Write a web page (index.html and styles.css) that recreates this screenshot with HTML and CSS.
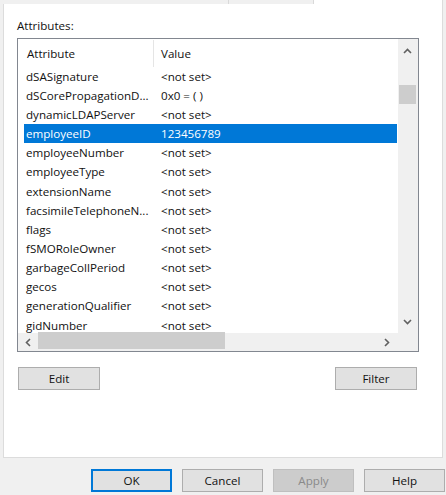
FILE: index.html
```html
<!DOCTYPE html>
<html>
<head>
<meta charset="utf-8">
<link rel="stylesheet" href="styles.css">
</head>
<body>
<div class="tabstrip">
  <div class="tab tab-a"></div>
  <div class="tab tab-b"></div>
  <div class="tab-rest"></div>
</div>
<div class="panel">
  <div class="label">Attributes:</div>
  <div class="listbox">
    <div class="listview">
      <div class="lv-header">
        <div class="hcell c1">Attribute</div>
        <div class="hcell c2">Value</div>
      </div>
      <div class="lv-body">
        <div class="row"><span class="cell">dSASignature</span><span class="cell">&lt;not set&gt;</span></div>
        <div class="row"><span class="cell">dSCorePropagationD...</span><span class="cell">0x0 = ( )</span></div>
        <div class="row"><span class="cell">dynamicLDAPServer</span><span class="cell">&lt;not set&gt;</span></div>
        <div class="row selected"><span class="cell">employeeID</span><span class="cell">123456789</span></div>
        <div class="row"><span class="cell">employeeNumber</span><span class="cell">&lt;not set&gt;</span></div>
        <div class="row"><span class="cell">employeeType</span><span class="cell">&lt;not set&gt;</span></div>
        <div class="row"><span class="cell">extensionName</span><span class="cell">&lt;not set&gt;</span></div>
        <div class="row"><span class="cell">facsimileTelephoneN...</span><span class="cell">&lt;not set&gt;</span></div>
        <div class="row"><span class="cell">flags</span><span class="cell">&lt;not set&gt;</span></div>
        <div class="row"><span class="cell">fSMORoleOwner</span><span class="cell">&lt;not set&gt;</span></div>
        <div class="row"><span class="cell">garbageCollPeriod</span><span class="cell">&lt;not set&gt;</span></div>
        <div class="row"><span class="cell">gecos</span><span class="cell">&lt;not set&gt;</span></div>
        <div class="row"><span class="cell">generationQualifier</span><span class="cell">&lt;not set&gt;</span></div>
        <div class="row"><span class="cell">gidNumber</span><span class="cell">&lt;not set&gt;</span></div>
      </div>
    </div>
    <div class="vscroll">
      <div class="sb-btn sb-up">
        <svg width="9" height="6" viewBox="0 0 9 6"><polyline points="1,5 4.5,1.5 8,5" fill="none" stroke="#606060" stroke-width="1.6"/></svg>
      </div>
      <div class="vthumb"></div>
      <div class="sb-spacer"></div>
      <div class="sb-btn sb-down">
        <svg width="9" height="6" viewBox="0 0 9 6"><polyline points="1,1 4.5,4.5 8,1" fill="none" stroke="#606060" stroke-width="1.6"/></svg>
      </div>
    </div>
    <div class="hscroll">
      <div class="sb-hbtn sb-left">
        <svg width="6" height="9" viewBox="0 0 6 9"><polyline points="5,1 1.5,4.5 5,8" fill="none" stroke="#606060" stroke-width="1.6"/></svg>
      </div>
      <div class="hthumb"></div>
      <div class="sb-spacer"></div>
      <div class="sb-hbtn sb-right">
        <svg width="6" height="9" viewBox="0 0 6 9"><polyline points="1,1 4.5,4.5 1,8" fill="none" stroke="#606060" stroke-width="1.6"/></svg>
      </div>
    </div>
    <div class="corner"></div>
  </div>
  <div class="actions">
    <button class="btn">Edit</button>
    <button class="btn">Filter</button>
  </div>
</div>
<div class="footer">
  <button class="btn dbtn default">OK</button>
  <button class="btn dbtn">Cancel</button>
  <button class="btn dbtn disabled">Apply</button>
  <button class="btn dbtn">Help</button>
</div>
</body>
</html>
```
FILE: styles.css
```css
html, body {
  margin: 0;
  padding: 0;
}
body {
  background: #f0f0f0;
  width: 446px;
  height: 495px;
  overflow: hidden;
  font-family: "Open Sans", "Noto Sans", "Liberation Sans", sans-serif;
  font-size: 11.6px;
  color: #111;
}
.tabstrip {
  display: flex;
  height: 4px;
}
.tab {
  background: #f0f0f0;
  border-right: 1px solid #d9d9d9;
  box-sizing: border-box;
}
.tab-a { width: 229px; }
.tab-b { width: 85px; }
.tab-rest {
  flex: 1;
  background: #fff;
  margin-right: 3px;
  border-right: 1px solid #dcdcdc;
}
.panel {
  margin: 0 3px 0 3px;
  height: 454px;
  box-sizing: border-box;
  background: #fff;
  border-left: 1px solid #dcdcdc;
  border-right: 1px solid #dcdcdc;
  border-bottom: 1px solid #dcdcdc;
  padding: 15px 0 0 13px;
}
.label {
  line-height: 14px;
  height: 14px;
  margin-bottom: 5px;
}
.listbox {
  width: 402px;
  height: 314px;
  box-sizing: border-box;
  border: 1px solid #828790;
  display: grid;
  grid-template-columns: 380px 20px;
  grid-template-rows: 294px 18px;
}
.listview {
  background: #fff;
  overflow: hidden;
}
.lv-header {
  display: flex;
  height: 28px;
  align-items: stretch;
}
.hcell {
  display: flex;
  align-items: center;
  box-sizing: border-box;
}
.hcell.c1 {
  width: 136px;
  padding-left: 9px;
  border-right: 1px solid #e5e5e5;
  margin-top: 1px;
}
.hcell.c2 {
  padding-left: 7px;
}
.lv-body {
  margin-top: -0.3px;
}
.row {
  display: grid;
  grid-template-columns: 135px 1fr;
  height: 19.15px;
  align-items: center;
  margin-left: 6px;
  margin-right: 1px;
  white-space: nowrap;
}
.cell {
  padding-left: 2px;
  overflow: hidden;
}
.row.selected {
  background: #0078d7;
  color: #fff;
}
.vscroll {
  background: #f0f0f0;
  display: flex;
  flex-direction: column;
}
.sb-btn {
  display: flex;
  align-items: center;
  justify-content: center;
  padding-right: 1px;
}
.sb-up { height: 24px; }
.sb-down { height: 22px; }
.vthumb {
  margin-top: 22px;
  margin-left: 1px;
  width: 17px;
  height: 19px;
  background: #cdcdcd;
}
.sb-spacer { flex: 1; }
.hscroll {
  background: #f0f0f0;
  display: flex;
  align-items: stretch;
}
.sb-hbtn {
  display: flex;
  align-items: center;
  justify-content: center;
}
.sb-left { width: 20px; }
.sb-right { width: 22px; }
.hthumb {
  width: 187px;
  margin-top: -1px;
  height: 17px;
  background: #cdcdcd;
}
.corner {
  background: #f0f0f0;
}
.actions {
  width: 402px;
  box-sizing: border-box;
  display: flex;
  justify-content: space-between;
  padding: 0 2px 0 1px;
  margin-top: 15px;
}
.btn {
  font-family: inherit;
  font-size: 11.6px;
  color: #111;
  background: #e1e1e1;
  border: 1px solid #adadad;
  width: 82px;
  height: 23px;
  padding: 0;
  margin: 0;
  box-sizing: border-box;
}
.footer {
  display: flex;
  justify-content: flex-end;
  gap: 10px;
  padding-right: 1px;
  margin-top: 11px;
}
.dbtn {
  width: 81px;
}
.dbtn.default {
  border: 1px solid #0078d7;
  box-shadow: inset 0 0 0 1px #0078d7;
}
.dbtn.disabled {
  background: #cccccc;
  border-color: #bfbfbf;
  color: #8a8a8a;
}
```
